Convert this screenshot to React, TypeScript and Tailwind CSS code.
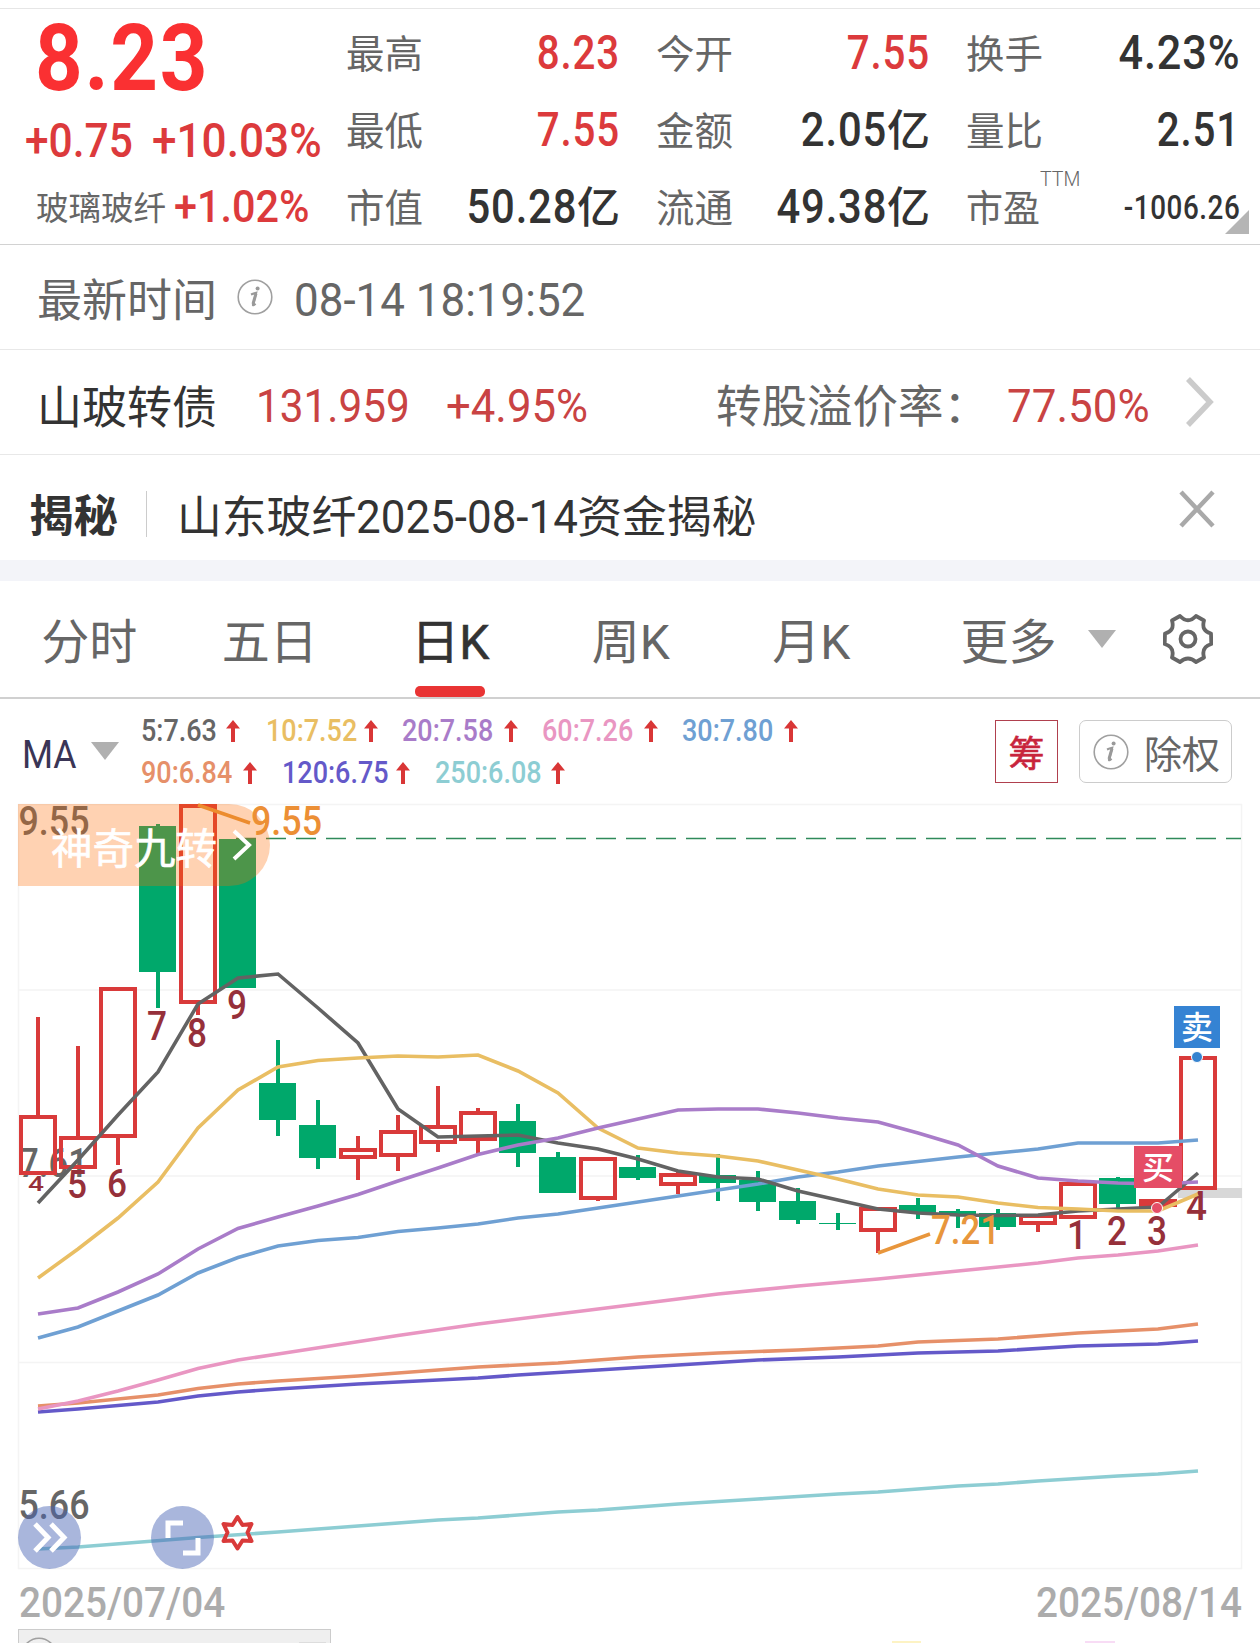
import type {ReactNode} from 'react';
import clsx from 'clsx';

const RED = '#d93a3a';
const GREEN = '#00a86b';

type Candle = {up: boolean; top: number; bottom: number; high?: number; low?: number};

// one entry per trading day, 40px apart, starting at x = 38
const candles: Candle[] = [
  {up: true, high: 1017, top: 1115, bottom: 1175},
  {up: true, high: 1046, top: 1136, bottom: 1169},
  {up: true, top: 987, bottom: 1138, low: 1165},
  {up: false, high: 824, top: 826, bottom: 972, low: 1008},
  {up: true, top: 804, bottom: 1004, low: 1015},
  {up: false, top: 839, bottom: 988},
  {up: false, high: 1040, top: 1083, bottom: 1120, low: 1136},
  {up: false, high: 1100, top: 1125, bottom: 1158, low: 1169},
  {up: true, high: 1136, top: 1148, bottom: 1159, low: 1180},
  {up: true, high: 1115, top: 1130, bottom: 1157, low: 1171},
  {up: true, high: 1086, top: 1125, bottom: 1144, low: 1152},
  {up: true, high: 1108, top: 1111, bottom: 1141, low: 1154},
  {up: false, high: 1104, top: 1121, bottom: 1153, low: 1167},
  {up: false, high: 1152, top: 1157, bottom: 1193},
  {up: true, top: 1157, bottom: 1200, low: 1201},
  {up: false, high: 1155, top: 1167, bottom: 1178, low: 1180},
  {up: true, high: 1171, top: 1173, bottom: 1186, low: 1194},
  {up: false, high: 1154, top: 1175, bottom: 1183, low: 1201},
  {up: false, high: 1171, top: 1180, bottom: 1202, low: 1211},
  {up: false, high: 1188, top: 1201, bottom: 1220, low: 1224},
  {up: false, high: 1213, top: 1223, bottom: 1224, low: 1230},
  {up: true, top: 1207, bottom: 1232, low: 1253},
  {up: false, high: 1198, top: 1205, bottom: 1213, low: 1219},
  {up: false, high: 1209, top: 1211, bottom: 1215, low: 1228},
  {up: false, high: 1209, top: 1213, bottom: 1227, low: 1230},
  {up: true, top: 1214, bottom: 1225, low: 1232},
  {up: true, top: 1182, bottom: 1219},
  {up: false, high: 1177, top: 1178, bottom: 1204, low: 1212},
  {up: true, top: 1199, bottom: 1207},
  {up: true, top: 1056, bottom: 1190}
];

const averages = [
  {
    color: '#8dcdd3',
    points:
      '38,1549 78,1547 198,1537.5 278,1532 358,1526 438,1520 478,1518 558,1512 598,1510 678,1504 758,1499 838,1494 878,1492 958,1486 998,1484 1038,1481 1118,1476 1158,1474 1198,1471'
  },
  {
    color: '#6459c9',
    points:
      '38,1412 78,1409 158,1402 198,1396 238,1392 278,1389 358,1384 438,1380 478,1378 518,1375 598,1370 678,1365 758,1360 838,1357 918,1353 998,1351 1078,1346 1158,1344 1198,1341'
  },
  {
    color: '#e69069',
    points:
      '38,1406 78,1403 118,1399 158,1395 198,1388.5 238,1384 278,1381 358,1376 438,1370 478,1367 558,1363 638,1357 718,1353 798,1350 878,1346 918,1342 998,1339 1078,1333 1118,1331 1158,1329 1198,1324'
  },
  {
    color: '#e996c2',
    points:
      '38,1409 78,1401 118,1391 158,1380 198,1368.5 238,1360 278,1354 398,1335.5 478,1324 598,1309 718,1294 798,1286 878,1279 958,1271 1038,1263 1078,1258 1118,1255 1158,1251 1198,1245'
  },
  {
    color: '#6fa0d3',
    points:
      '38,1338 78,1327 118,1311 158,1295 198,1273 238,1257.5 278,1246 318,1240.5 358,1237.5 398,1231.5 438,1228 478,1224 518,1218 558,1214 598,1208 638,1202 678,1196 718,1190 758,1184 798,1177 838,1172 878,1166 918,1161.5 958,1157 998,1153 1038,1149 1078,1143 1118,1143 1158,1143 1198,1140'
  },
  {
    color: '#636363',
    points:
      '38,1203 78,1160 118,1115 158,1072 198,1004 238,978 278,974 318,1008 358,1043 398,1109 438,1137 478,1136 518,1135 558,1143 598,1149 638,1159 678,1171 718,1177 758,1179 798,1191 838,1200 878,1209 918,1213 958,1215 998,1215.5 1038,1215 1078,1211 1118,1209 1158,1207 1198,1173'
  },
  {
    color: '#e9be63',
    points:
      '38,1278 78,1249 118,1218 158,1182 198,1128 238,1090 278,1067 318,1060.5 358,1058 398,1056 438,1057 478,1055 518,1071 558,1093 598,1128 638,1148 678,1153 718,1156 758,1161 798,1170 838,1179 878,1189 918,1195 958,1197 998,1203 1038,1207.5 1078,1209 1118,1211 1158,1211 1198,1194'
  },
  {
    color: '#a97cc9',
    points:
      '38,1314 78,1308 118,1292 158,1274 198,1249 238,1228.5 278,1217 318,1206 358,1194.5 398,1181 438,1168 478,1154.5 518,1145 558,1138 598,1128 638,1119 678,1110 718,1109 758,1109 798,1113 838,1118 878,1122 918,1133 958,1145 998,1166 1038,1178 1078,1181 1118,1183 1158,1184 1198,1182'
  }
];

const signals = [
  {n: '4', x: 28, y: 1191, cap: 15, w: 16},
  {n: '5', x: 67, y: 1198, cap: 28, w: 20},
  {n: '6', x: 107, y: 1197, cap: 28, w: 20},
  {n: '7', x: 147, y: 1040, cap: 29, w: 20},
  {n: '8', x: 187, y: 1047, cap: 29, w: 20},
  {n: '9', x: 227, y: 1019, cap: 29, w: 20},
  {n: '1', x: 1067, y: 1249, cap: 29, w: 20},
  {n: '2', x: 1107, y: 1245, cap: 29, w: 20},
  {n: '3', x: 1147, y: 1245, cap: 29, w: 20},
  {n: '4', x: 1186, y: 1220, cap: 29, w: 21}
];

function Num({children, className}: {children: ReactNode; className?: string}) {
  return <span className={clsx('inline-block whitespace-nowrap leading-none', className)}>{children}</span>;
}

function InfoIcon({className}: {className?: string}) {
  return (
    <svg viewBox="0 0 36 36" className={clsx('h-9 w-9 shrink-0', className)}>
      <circle cx="18" cy="18" r="16.8" fill="none" stroke="#a0a0a0" strokeWidth="1.6" />
      <circle cx="20.6" cy="9.6" r="2" fill="#999" />
      <path d="M14 15.5c2.2-.9 3.6-1.3 5.2-1.7L16 25.5c-.3 1.2.6 1 2.6-.8" fill="none" stroke="#999" strokeWidth="2.1" />
      <path d="m19 14.5-3 10.5" stroke="#999" strokeWidth="3" />
    </svg>
  );
}

function Triangle({className}: {className?: string}) {
  return (
    <svg viewBox="0 0 28 18" className={clsx('h-[18px] w-7 shrink-0', className)}>
      <path d="M0 0h28L14 18z" fill="#b0b0b0" />
    </svg>
  );
}

function UpArrow() {
  return (
    <svg viewBox="0 0 14 23" className="h-[23px] w-[14px] shrink-0">
      <path d="M7 0 14 8.500H9V22H5V8.500H0z" fill="#d93636" />
    </svg>
  );
}

type StatProps = {label: string; value: string; unit?: string; red?: boolean; scale?: string};

function Stat({label, value, unit, red, scale = 'scale-x-[0.84]'}: StatProps) {
  return (
    <div className="flex h-[77px] items-center justify-between">
      <span className="-ml-px pt-px text-[38.5px] leading-none text-[#666]">{label}</span>
      <span className={clsx('flex items-baseline pb-[3px] font-medium', red ? 'text-[#dc3a3c]' : 'text-[#333]')}>
        <Num className={clsx('origin-right text-[48px] tracking-[0.02em]', scale)}>{value}</Num>
        {unit && <span className="text-[43px] leading-none">{unit}</span>}
      </span>
    </div>
  );
}

function PeStat() {
  return (
    <div className="relative flex h-[77px] items-center justify-between">
      <span className="-ml-px pt-px text-[37px] leading-none text-[#666]">市盈</span>
      <Num className="absolute -top-px left-[73px] origin-left scale-x-[0.93] text-[21px] font-light text-[#666]">TTM</Num>
      <Num className="origin-right scale-x-[0.83] pb-px text-[33.5px] font-medium tracking-[0.02em] text-[#333]">-1006.26</Num>
      <svg viewBox="0 0 24 24" className="absolute -right-[9px] bottom-[13px] h-6 w-6">
        <path d="M24 0v24H0z" fill="#b5b5b5" />
      </svg>
    </div>
  );
}

function Quote() {
  return (
    <section className="flex h-[237px] border-t border-b border-t-[#e6e6e6] border-b-[#d2d2d2] pt-[7px]">
      <div className="w-[347px] shrink-0">
        <div className="-mt-[4px] h-[102px] pl-[35px]">
          <Num className="origin-left scale-x-[0.895] text-[93px] font-bold tracking-[0.02em] text-[#fa3032]">8.23</Num>
        </div>
        <div className="flex h-[54px] items-center pl-[25px] font-medium text-[#dc3a3c]">
          <div className="w-[127px]">
            <Num className="origin-left scale-x-[0.885] text-[48px]">+0.75</Num>
          </div>
          <Num className="origin-left scale-x-[0.92] text-[48px]">+10.03%</Num>
        </div>
        <div className="flex h-[77px] items-center pl-[36px]">
          <span className="w-[138px] pt-[5px] text-[32.5px] leading-none text-[#666]">玻璃玻纤</span>
          <Num className="origin-left scale-x-[0.92] text-[45px] font-medium text-[#dc3a3c]">+1.02%</Num>
        </div>
      </div>
      <div className="grid w-[893px] grid-cols-3 content-start gap-x-[37px]">
        <Stat label="最高" value="8.23" red />
        <Stat label="今开" value="7.55" red />
        <Stat label="换手" value="4.23%" scale="scale-x-[0.9]" />
        <Stat label="最低" value="7.55" red />
        <Stat label="金额" value="2.05" unit="亿" scale="scale-x-[0.87]" />
        <Stat label="量比" value="2.51" />
        <Stat label="市值" value="50.28" unit="亿" scale="scale-x-[0.87]" />
        <Stat label="流通" value="49.38" unit="亿" scale="scale-x-[0.87]" />
        <PeStat />
      </div>
    </section>
  );
}

function InfoRows() {
  return (
    <>
      <div className="flex h-[105px] items-center border-b border-[#e8e8e8] pl-[37px] text-[#666]">
        <span className="w-[200px] pt-[9px] text-[45px] leading-none">最新时间</span>
        <InfoIcon />
        <Num className="ml-[21px] origin-left scale-x-[0.935] pt-[5px] text-[47px]">08-14 18:19:52</Num>
      </div>
      <div className="flex h-[105px] items-center border-b border-[#e8e8e8] pl-[37px] text-[#c94343]">
        <span className="w-[219px] pt-[12px] text-[45px] leading-none text-[#333]">山玻转债</span>
        <div className="w-[190px] pt-[7px]">
          <Num className="origin-left scale-x-[0.9] text-[47px]">131.959</Num>
        </div>
        <div className="w-[270px] pt-[7px]">
          <Num className="origin-left scale-x-[0.93] text-[47px]">+4.95%</Num>
        </div>
        <span className="w-[291px] pt-[12px] text-[45.5px] leading-none text-[#666]">转股溢价率：</span>
        <div className="w-[179px] pt-[7px]">
          <Num className="origin-left scale-x-[0.935] text-[47px]">77.50%</Num>
        </div>
        <svg viewBox="0 0 28 50" className="h-[50px] w-7" fill="none" stroke="#cbcbcb" strokeWidth="5.5">
          <path d="M2 2 24 25 2 48" />
        </svg>
      </div>
      <div className="flex h-[105px] items-center pl-[29px] text-[#333]">
        <span className="pt-[20px] text-[44.5px] leading-none font-bold">揭秘</span>
        <span className="mt-[12px] ml-[28px] h-[46px] w-px bg-[#ccc]" />
        <div className="ml-[30px] flex w-[1002px] items-baseline pt-[19px] text-[44.8px] leading-none">
          山东玻纤
          <span className="w-[221px]">
            <Num className="origin-left scale-x-[0.935] text-[47px]">2025-08-14</Num>
          </span>
          资金揭秘
        </div>
        <svg viewBox="0 0 36 38" className="mt-[2px] h-[38px] w-9" fill="none" stroke="#a9a9a9" strokeWidth="4.5">
          <path d="m2 2 32 34M34 2 2 36" />
        </svg>
      </div>
      <div className="h-[21px] bg-[#f3f4f9]" />
    </>
  );
}

function Tabs() {
  return (
    <nav className="flex h-[118px] items-center border-b-2 border-[#d0d0d0] text-[48px] leading-none text-[#666]">
      {['分时', '五日', '日K', '周K', '月K'].map((tab) => (
        <div
          key={tab}
          className={clsx('relative -left-px flex h-full w-[180.5px] items-center justify-center pt-[7px]', tab === '日K' && 'text-[#333] [-webkit-text-stroke:0.6px_#333]')}
        >
          {tab}
          {tab === '日K' && <span className="absolute bottom-0 h-[11px] w-[70px] rounded-[5px] bg-[#e93434]" />}
        </div>
      ))}
      <span className="ml-[58px] pt-[7px]">更多</span>
      <Triangle className="ml-[31px]" />
      <svg viewBox="0 0 50 50" className="ml-[47px] h-[50px] w-[50px]" fill="none" stroke="#666" strokeWidth="3.8" strokeLinejoin="round">
        <path d="M17 2Q25 10.500 33 2L41 6.500Q38 17 48 19.500L48.300 30Q38 33 41 43.500L33 48Q25 41 17 48L9 43.500Q12 33 1.700 30L2 19.500Q12 17 9 6.500Z" />
        <circle cx="25" cy="25" r="7.5" />
      </svg>
    </nav>
  );
}

function MaItem({text, color, width}: {text: string; color: string; width: string}) {
  return (
    <div className={clsx('flex items-center', color)}>
      <div className={width}>
        <Num className="origin-left scale-x-[0.87] text-[31px] font-medium">{text}</Num>
      </div>
      <UpArrow />
    </div>
  );
}

function ChartHeader() {
  return (
    <div className="flex h-[104px] items-start pl-[22px]">
      <Num className="mt-[36px] w-[69px] origin-left scale-x-[0.9] text-[39.5px] text-[#3a3556]">MA</Num>
      <Triangle className="mt-[43px]" />
      <div className="ml-[22px] flex w-[854px] flex-col pt-[11px]">
        <div className="flex h-[42px] items-center">
          <div className="w-[125px]"><MaItem text="5:7.63" color="text-[#666]" width="w-[85px]" /></div>
          <div className="w-[136px]"><MaItem text="10:7.52" color="text-[#e9be63]" width="w-[98px]" /></div>
          <div className="w-[140px]"><MaItem text="20:7.58" color="text-[#a97cc9]" width="w-[102px]" /></div>
          <div className="w-[140px]"><MaItem text="60:7.26" color="text-[#e996c2]" width="w-[102px]" /></div>
          <MaItem text="30:7.80" color="text-[#6fa0d3]" width="w-[102px]" />
        </div>
        <div className="flex h-[42px] items-center">
          <div className="w-[141px]"><MaItem text="90:6.84" color="text-[#e69069]" width="w-[102px]" /></div>
          <div className="w-[153px]"><MaItem text="120:6.75" color="text-[#6459c9]" width="w-[114px]" /></div>
          <MaItem text="250:6.08" color="text-[#8dcdd3]" width="w-[116px]" />
        </div>
      </div>
      <span className="mt-[21px] flex h-[63px] w-[63px] items-center justify-center border border-[#b0404e] pt-[7px] text-[36px] leading-none text-[#c8243c] [-webkit-text-stroke:0.6px_#c8243c]">
        筹
      </span>
      <span className="mt-[21px] ml-[21px] flex h-[63px] w-[153px] items-center gap-[15px] rounded-[7px] border border-[#ccc] pl-[13px] text-[38px] leading-none text-[#666]">
        <InfoIcon />
        <span className="pt-[7px]">除权</span>
      </span>
    </div>
  );
}

function Label({x, y, w, cap, fill, children}: {x: number; y: number; w: number; cap: number; fill: string; children: string}) {
  return (
    <text x={x} y={y} fontSize={cap / 0.711} fontWeight={500} fill={fill} textLength={w} lengthAdjust="spacingAndGlyphs">
      {children}
    </text>
  );
}

function Chart() {
  return (
    <div className="relative h-[767px]">
      <svg viewBox="0 803 1260 767" className="block h-[767px] w-[1260px] overflow-visible">
        <g stroke="#f4f4f4" strokeWidth="1.5" fill="none">
          <rect x="18.5" y="804.5" width="1223" height="764" />
          <path d="M18 990H1242M18 1176H1242M18 1362.500H1242" />
        </g>
        <Label x={18.5} y={835} w={71} cap={29} fill="#666">9.55</Label>
        <Label x={19} y={1177} w={69} cap={29} fill="#666">7.61</Label>
        <Label x={18.5} y={1519} w={71} cap={29} fill="#666">5.66</Label>
        <rect x="1178" y="1188" width="64" height="10" fill="#d8d8d8" />

        {candles.map((c, i) => {
          const x = 38 + i * 40;
          const color = c.up ? RED : GREEN;
          return (
            <g key={x} stroke={color} strokeWidth="4">
              {c.high && <path d={`M${x} ${c.high}V${c.top}`} />}
              {c.low && <path d={`M${x} ${c.bottom}V${c.low}`} />}
              {c.up ? (
                <rect x={x - 17} y={c.top + 2} width="34" height={c.bottom - c.top - 4} fill="none" />
              ) : (
                <rect x={x - 19} y={c.top} width="37" height={c.bottom - c.top} fill={color} stroke="none" />
              )}
            </g>
          );
        })}

        <path d="M236 838.500H1241" stroke="#2f8a5a" strokeWidth="1.3" strokeDasharray="20 10" />

        {signals.map((s) => (
          <Label key={s.n + s.x} x={s.x} y={s.y} w={s.w} cap={s.cap} fill="#96303a">
            {s.n}
          </Label>
        ))}

        {averages.map((line) => (
          <polyline key={line.color} points={line.points} fill="none" stroke={line.color} strokeWidth="3.6" />
        ))}

        <path d="m878 1253 52-19" stroke="#e8963c" strokeWidth="3.5" />
        <Label x={931} y={1244} w={69} cap={28.5} fill="#e8963c">7.21</Label>

        <path
          d="m237.500 1517 5 8 9-1-4 8.500 4 8.500-9-.5-5 8-5-8-9 .5 4-8.500-4-8.500 9 1z"
          fill="none"
          stroke="#d93a3a"
          strokeWidth="4"
          strokeLinejoin="round"
        />

        <circle cx="1197" cy="1057" r="5.5" fill="#3583cf" stroke="#fff" strokeWidth="1" />
        <circle cx="1157" cy="1208" r="5.5" fill="#e54d66" stroke="#fff" strokeWidth="1" />
      </svg>

      <span className="absolute top-[203px] left-[1174px] flex h-[42px] w-[46px] items-center justify-center bg-[#3583d3] pt-[2px] text-[32px] leading-none font-medium text-white">
        卖
      </span>
      <span className="absolute top-[343px] left-[1134px] flex h-[42px] w-[48px] items-center justify-center bg-[#e54d66] pt-px text-[32px] leading-none font-medium text-white">
        买
      </span>

      <button className="absolute top-px left-[18px] flex h-[82px] w-[252px] items-center rounded-r-full bg-[rgba(255,105,0,0.3)] pl-[33px] text-[41.5px] leading-none text-white">
        <span className="pt-[9px] [-webkit-text-stroke:0.6px_#fff]">神奇九转</span>
        <svg viewBox="0 0 20 32" className="ml-[15px] h-8 w-5" fill="none" stroke="#fff" strokeWidth="4">
          <path d="M2 2 17 16 2 30" />
        </svg>
      </button>
      <svg viewBox="0 803 340 60" className="pointer-events-none absolute top-0 left-0 h-[60px] w-[340px] overflow-visible">
        <path d="m198 805 52 18" stroke="#ec8c2e" strokeWidth="3.5" />
        <Label x={251} y={835} w={71} cap={28.5} fill="#ec8f35">9.55</Label>
      </svg>

      <button className="absolute top-[703px] left-[18px] flex h-[63px] w-[63px] items-center justify-center rounded-full bg-[rgba(72,100,180,0.47)]">
        <svg viewBox="0 0 36 32" className="h-8 w-9" fill="none" stroke="#fff" strokeWidth="5">
          <path d="M3 2 16 15.500 3 29M19 2 32 15.500 19 29" />
        </svg>
      </button>
      <button className="absolute top-[703px] left-[151px] flex h-[63px] w-[63px] items-center justify-center rounded-full bg-[rgba(72,100,180,0.47)]">
        <svg viewBox="0 0 36 36" className="h-9 w-9" fill="none" stroke="#fff" strokeWidth="5">
          <path d="M3 18V3h15M33 18v15H18" />
        </svg>
      </button>
    </div>
  );
}

export default function App() {
  return (
    <main className="h-[1643px] w-[1260px] overflow-hidden bg-white pt-2 font-[Roboto,'Noto_Sans_CJK_SC',sans-serif]">
      <Quote />
      <InfoRows />
      <Tabs />
      <ChartHeader />
      <Chart />
      <div className="flex h-[59px] items-center justify-between pt-[5px] pr-[18px] pl-[19px] font-medium text-[#acacac]">
        <Num className="origin-left scale-x-[0.9] text-[43px]">2025/07/04</Num>
        <Num className="origin-right scale-x-[0.9] text-[43px]">2025/08/14</Num>
      </div>
      <div className="flex items-start">
        <div className="ml-[18px] flex h-10 w-[313px] justify-between border border-[#ccc] bg-[#efefef] pt-[7px] pr-1 pl-[2px]">
          <InfoIcon />
          <span className="mt-[5px] h-4 w-[27px] bg-[#ddd]" />
        </div>
        <span className="mt-[12px] ml-[561px] h-2 w-[29px] bg-[#fdf3c4]" />
        <span className="mt-[12px] ml-[164px] h-2 w-[30px] bg-[#f8dcf5]" />
      </div>
    </main>
  );
}
